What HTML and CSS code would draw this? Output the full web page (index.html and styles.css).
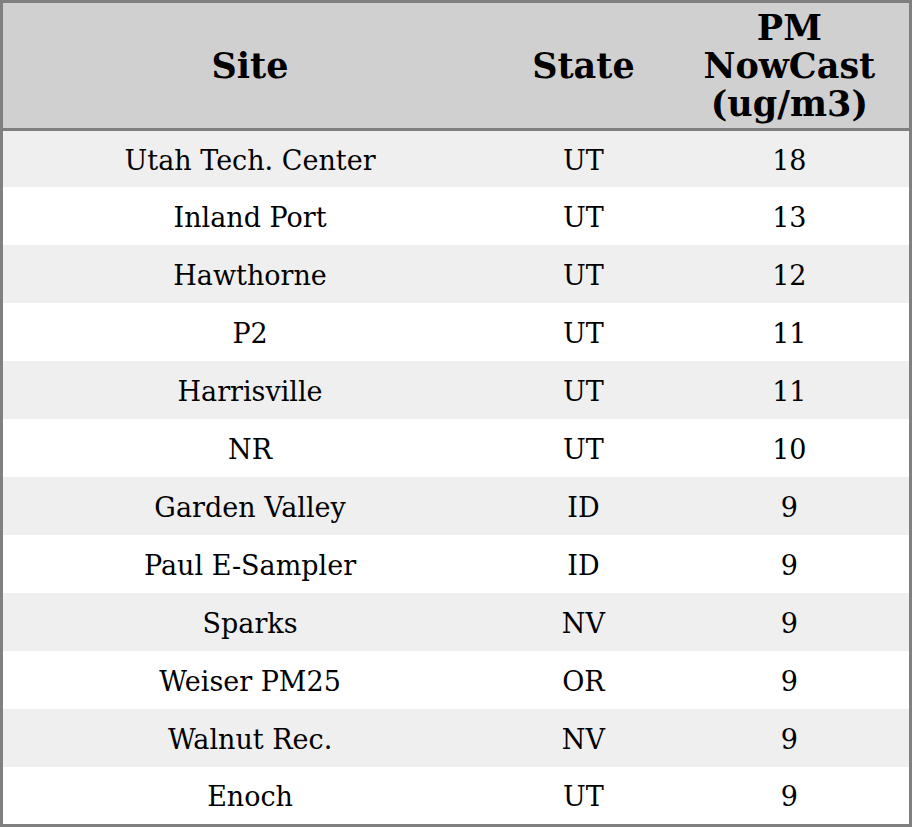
FILE: index.html
```
<!DOCTYPE html>
<html>
<head>
<meta charset="utf-8">
<link rel="stylesheet" href="styles.css">
</head>
<body>
<table class="grid">
  <colgroup>
    <col class="c-site"><col class="c-state"><col class="c-pm">
  </colgroup>
  <thead>
    <tr class="head"><th>Site</th><th>State</th><th>PM<br>NowCast<br>(ug/m3)</th></tr>
  </thead>
  <tbody>
    <tr><td>Utah Tech. Center</td><td>UT</td><td>18</td></tr>
    <tr><td>Inland Port</td><td>UT</td><td>13</td></tr>
    <tr><td>Hawthorne</td><td>UT</td><td>12</td></tr>
    <tr><td>P2</td><td>UT</td><td>11</td></tr>
    <tr><td>Harrisville</td><td>UT</td><td>11</td></tr>
    <tr><td>NR</td><td>UT</td><td>10</td></tr>
    <tr><td>Garden Valley</td><td>ID</td><td>9</td></tr>
    <tr><td>Paul E-Sampler</td><td>ID</td><td>9</td></tr>
    <tr><td>Sparks</td><td>NV</td><td>9</td></tr>
    <tr><td>Weiser PM25</td><td>OR</td><td>9</td></tr>
    <tr><td>Walnut Rec.</td><td>NV</td><td>9</td></tr>
    <tr><td>Enoch</td><td>UT</td><td>9</td></tr>
  </tbody>
</table>
</body>
</html>
```
FILE: styles.css
```
html, body {
  margin: 0;
  padding: 0;
  background: #ffffff;
}
.grid {
  width: 912px;
  border-collapse: collapse;
  table-layout: fixed;
  border: 3px solid #808080;
  font-family: "DejaVu Serif", serif;
  color: #000;
}
.c-site { width: 494px; }
.c-state { width: 172px; }
.c-pm { width: 240px; }
.head th {
  background: #d0d0d0;
  font-size: 35px;
  font-weight: bold;
  line-height: 38px;
  height: 125px;
  padding: 0;
  text-align: center;
  vertical-align: middle;
  border-bottom: 3px solid #808080;
}
tbody td {
  font-size: 27px;
  height: 56px;
  padding: 2px 0 0;
  text-align: center;
  vertical-align: middle;
}
tbody tr:first-child td {
  height: 54px;
}
tbody tr:last-child td {
  height: 55px;
}
tbody tr:nth-child(odd) td {
  background: #efefef;
}
```
